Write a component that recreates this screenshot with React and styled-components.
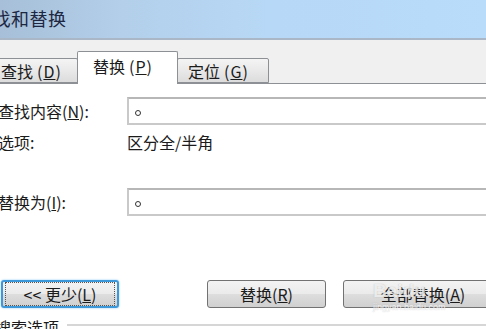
import styled, { createGlobalStyle } from "styled-components";

const GlobalStyle = createGlobalStyle`
  html, body {
    margin: 0;
    padding: 0;
    background: #ffffff;
  }
  body {
    font-family: "Noto Sans CJK SC", "Noto Sans", sans-serif;
    color: #1b1b1b;
  }
`;

// 창 전체
const Dialog = styled.div`
  width: 486px;
  height: 329px;
  overflow: hidden;
  display: flex;
  flex-direction: column;
  background: #ffffff;
`;

const TitleBar = styled.div`
  height: 38px;
  flex-shrink: 0;
  display: flex;
  align-items: center;
  background: linear-gradient(90deg, #a7bfd8 0%, #b3cfea 25%, #b7d8f6 55%, #b8dcfa 100%);
  border-bottom: 2px solid #a9b7c6;
  overflow: hidden;
`;

const Title = styled.div`
  margin-left: -26px;
  margin-top: -3px;
  font-size: 18px;
  letter-spacing: 0.5px;
  color: #1d2742;
  white-space: nowrap;
`;

const TabStrip = styled.div`
  height: 43px;
  flex-shrink: 0;
  display: flex;
  align-items: flex-end;
  margin-left: -12px;
  background: #f0f0f0;
  border-bottom: 1px solid #8d9095;
`;

const Tab = styled.div`
  box-sizing: border-box;
  width: ${(p) => p.$w}px;
  height: ${(p) => (p.$active ? 33 : 25)}px;
  margin-bottom: ${(p) => (p.$active ? -1 : 0)}px;
  display: flex;
  align-items: center;
  padding-left: ${(p) => p.$pad}px;
  padding-bottom: ${(p) => (p.$active ? 4 : 0)}px;
  font-size: 16px;
  white-space: nowrap;
  border: 1px solid #8d9095;
  border-bottom: ${(p) => (p.$active ? "none" : "1px solid #8d9095")};
  border-radius: 2px 2px 0 0;
  background: ${(p) =>
    p.$active ? "#ffffff" : "linear-gradient(180deg, #f4f4f4 0%, #e9e9e9 50%, #dcdcdc 100%)"};
  & + & {
    margin-left: -1px;
  }
`;

const Key = styled.span`
  margin-left: 4px;
  letter-spacing: 1px;
`;

const Content = styled.div`
  flex: 1;
  display: flex;
  flex-direction: column;
  padding-top: 13px;
  background: #ffffff;
`;

const FormGrid = styled.div`
  display: grid;
  grid-template-columns: 129px 1fr;
  margin-left: -2px;
  margin-right: -10px;
  align-items: center;
`;

const Label = styled.div`
  font-size: 16px;
  line-height: 17px;
  white-space: nowrap;
  margin-top: ${(p) => p.$mt || 0}px;
`;

const Value = styled.div`
  font-size: 16px;
  line-height: 17px;
  margin-top: ${(p) => p.$mt || 0}px;
`;

const Input = styled.div`
  box-sizing: border-box;
  height: 28px;
  margin-top: ${(p) => p.$mt || 0}px;
  border: 2px solid #c9c9c9;
  border-top-color: #b7b7b7;
  background: #ffffff;
  display: flex;
  align-items: center;
  padding-left: 6px;
`;

const Dot = styled.span`
  display: inline-block;
  width: 4px;
  height: 4px;
  border: 1.5px solid #333;
  border-radius: 50%;
  margin-top: 3px;
`;

const ButtonRow = styled.div`
  position: relative;
  display: flex;
  flex-shrink: 0;
  margin-top: 64px;
  margin-left: 1px;
  margin-right: -20px;
  height: 28px;
`;

const Button = styled.div`
  box-sizing: border-box;
  width: ${(p) => p.$w}px;
  margin-left: ${(p) => p.$ml || 0}px;
  height: 28px;
  display: flex;
  align-items: center;
  justify-content: center;
  font-size: 16px;
  white-space: nowrap;
  border: ${(p) => (p.$focus ? "2px solid #3c98d8" : "1px solid #727272")};
  border-radius: 3px;
  background: linear-gradient(180deg, #f3f3f3 0%, #ebebeb 48%, #dddddd 52%, #d0d0d0 100%);
  box-shadow: ${(p) => (p.$focus ? "0 0 2px #7cc3f2" : "none")};
`;

const FocusRing = styled.div`
  box-sizing: border-box;
  width: 100%;
  height: 100%;
  margin: 2px;
  border: 1px dotted #555;
  display: flex;
  align-items: center;
  justify-content: center;
`;

// 워터마크 (버튼 위에 겹침)
const Watermark = styled.div`
  position: absolute;
  left: 372px;
  top: 0px;
  display: flex;
  flex-direction: column;
  align-items: flex-start;
  pointer-events: none;
`;

const WmLogo = styled.div`
  font-family: "Liberation Sans", sans-serif;
  font-weight: bold;
  font-size: 19px;
  line-height: 22px;
  color: rgba(255, 255, 255, 0.75);
  text-shadow: 0 0 1px rgba(120, 120, 120, 0.5);
`;

const WmUrl = styled.div`
  font-family: "Liberation Sans", sans-serif;
  font-size: 9px;
  line-height: 10px;
  color: rgba(255, 255, 255, 0.85);
  text-shadow: 0 0 1px rgba(140, 140, 140, 0.5);
`;

const GroupHead = styled.div`
  display: flex;
  align-items: flex-start;
  margin-top: 10px;
  margin-left: -5px;
  gap: 8px;
`;

const GroupTitle = styled.div`
  font-size: 16px;
  line-height: 18px;
  white-space: nowrap;
`;

const GroupLine = styled.div`
  flex: 1;
  height: 2px;
  margin-top: 6px;
  background: #d6d6d6;
`;

const App = () => (
  <>
    <GlobalStyle />
    <Dialog>
      <TitleBar>
        <Title>查找和替换</Title>
      </TitleBar>
      <TabStrip>
        <Tab $w={90} $pad={12}>
          查找<Key>(<u>D</u>)</Key>
        </Tab>
        <Tab $w={101} $pad={15} $active>
          替换<Key>(<u>P</u>)</Key>
        </Tab>
        <Tab $w={92} $pad={10}>
          定位<Key>(<u>G</u>)</Key>
        </Tab>
      </TabStrip>
      <Content>
        <FormGrid>
          <Label>查找内容(<u>N</u>):</Label>
          <Input>
            <Dot />
          </Input>
          <Label $mt={9}>选项:</Label>
          <Value $mt={9}>区分全/半角</Value>
          <Label $mt={37}>替换为(<u>I</u>):</Label>
          <Input $mt={37}>
            <Dot />
          </Input>
        </FormGrid>
        <ButtonRow>
          <Button $w={118} $focus>
            <FocusRing>&lt;&lt; 更少(<u>L</u>)</FocusRing>
          </Button>
          <Button $w={119} $ml={88}>
            替换(<u>R</u>)
          </Button>
          <Button $w={160} $ml={17}>
            全部替换(<u>A</u>)
          </Button>
          <Watermark>
            <WmLogo>Baidu</WmLogo>
            <WmUrl>jingyan.baidu.com</WmUrl>
          </Watermark>
        </ButtonRow>
        <GroupHead>
          <GroupTitle>搜索选项</GroupTitle>
          <GroupLine />
        </GroupHead>
      </Content>
    </Dialog>
  </>
);

export default App;
